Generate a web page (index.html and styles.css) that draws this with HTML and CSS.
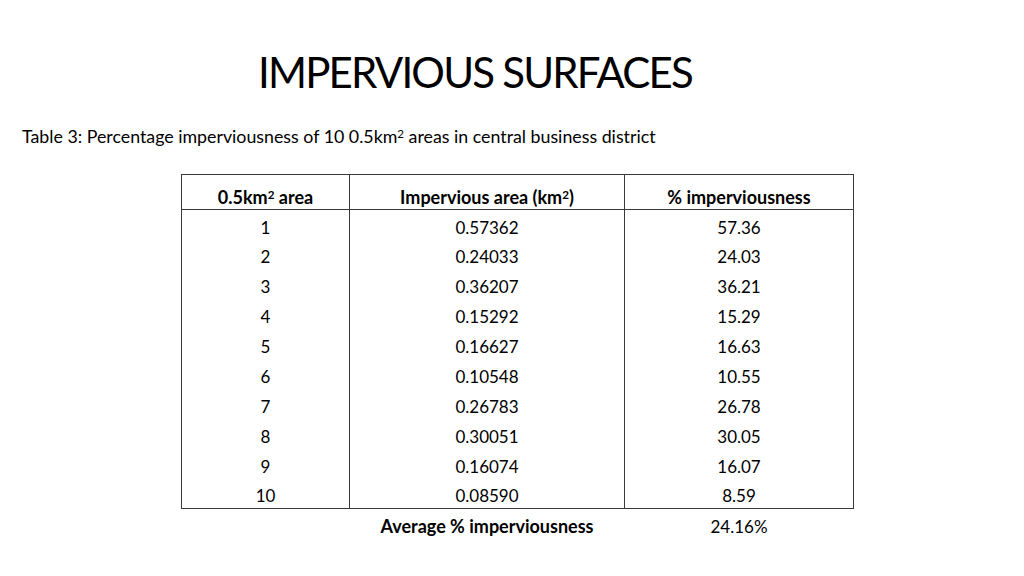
FILE: index.html
```html
<!DOCTYPE html>
<html>
<head>
<meta charset="utf-8">
<link rel="stylesheet" href="styles.css">
</head>
<body>
<div class="slide">
  <h1 class="title">IMPERVIOUS SURFACES</h1>
  <p class="caption">Table 3: Percentage imperviousness of 10 0.5km<sup>2</sup> areas in central business district</p>
  <table class="data">
    <colgroup><col class="c1"><col class="c2"><col class="c3"></colgroup>
    <thead>
      <tr><th>0.5km<sup>2</sup> area</th><th>Impervious area (km<sup>2</sup>)</th><th>% imperviousness</th></tr>
    </thead>
    <tbody>
      <tr><td>1</td><td>0.57362</td><td>57.36</td></tr>
      <tr><td>2</td><td>0.24033</td><td>24.03</td></tr>
      <tr><td>3</td><td>0.36207</td><td>36.21</td></tr>
      <tr><td>4</td><td>0.15292</td><td>15.29</td></tr>
      <tr><td>5</td><td>0.16627</td><td>16.63</td></tr>
      <tr><td>6</td><td>0.10548</td><td>10.55</td></tr>
      <tr><td>7</td><td>0.26783</td><td>26.78</td></tr>
      <tr><td>8</td><td>0.30051</td><td>30.05</td></tr>
      <tr><td>9</td><td>0.16074</td><td>16.07</td></tr>
      <tr class="last"><td>10</td><td>0.08590</td><td>8.59</td></tr>
    </tbody>
    <tfoot>
      <tr><td></td><td class="avg-label">Average % imperviousness</td><td>24.16%</td></tr>
    </tfoot>
  </table>
</div>
</body>
</html>
```
FILE: styles.css
```css
html, body {
  margin: 0;
  padding: 0;
  background: #ffffff;
}
.slide {
  width: 1024px;
  height: 576px;
  overflow: hidden;
  font-family: Lato, "Open Sans", sans-serif;
  color: #000;
  padding-top: 50px;
  box-sizing: border-box;
}
.title {
  margin: 0 0 0 258px;
  font-size: 42px;
  line-height: 44px;
  font-weight: 400;
  letter-spacing: -1.8px;
}
.caption {
  margin: 31px 0 0 22px;
  font-size: 17.8px;
  line-height: 22px;
}
sup {
  font-size: 0.65em;
  line-height: 0;
  vertical-align: 0.45em;
}
.data {
  margin: 27px 0 0 181px;
  border-collapse: collapse;
  font-size: 17px;
}
.c1 { width: 168px; }
.c2 { width: 275px; }
.c3 { width: 229px; }
.data th, .data td {
  padding: 0;
  text-align: center;
}
.data th {
  height: 35px;
  font-weight: 700;
  font-size: 18px;
  border: 1px solid #3a3a3a;
  vertical-align: middle;
  padding-top: 9px;
  box-sizing: border-box;
}
.data tbody td {
  height: 29.9px;
  padding-top: 5px;
  box-sizing: border-box;
  border-left: 1px solid #3a3a3a;
  border-right: 1px solid #3a3a3a;
}
.data tbody tr.last td {
  border-bottom: 1px solid #3a3a3a;
}
.data tfoot td {
  height: 30px;
  padding-top: 5px;
  box-sizing: border-box;
  border: none;
}
.avg-label {
  font-weight: 700;
  font-size: 18px;
}
```
